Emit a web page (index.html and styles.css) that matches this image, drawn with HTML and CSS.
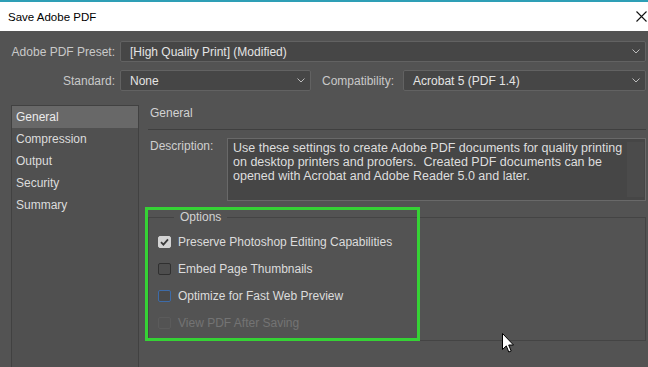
FILE: index.html
```html
<!DOCTYPE html>
<html>
<head>
<meta charset="utf-8">
<link rel="stylesheet" href="styles.css">
</head>
<body>
<div class="window">
  <div class="titlebar">
    <span class="title">Save Adobe PDF</span>
    <svg class="close" width="11" height="11" viewBox="0 0 11 11"><path d="M0.5 0.5 L10.5 10.5 M10.5 0.5 L0.5 10.5" stroke="#111" stroke-width="1.1" fill="none"/></svg>
  </div>

  <div class="top">
    <div class="row">
      <span class="lbl lbl-main">Adobe PDF Preset:</span>
      <div class="select grow">
        <span>[High Quality Print] (Modified)</span>
        <svg class="chev" width="8" height="5" viewBox="0 0 8 5"><path d="M0.5 0.5 L4 4 L7.5 0.5" stroke="#bdbdbd" fill="none"/></svg>
      </div>
    </div>
    <div class="row">
      <span class="lbl lbl-main">Standard:</span>
      <div class="select std">
        <span>None</span>
        <svg class="chev" width="8" height="5" viewBox="0 0 8 5"><path d="M0.5 0.5 L4 4 L7.5 0.5" stroke="#bdbdbd" fill="none"/></svg>
      </div>
      <span class="lbl lbl-compat">Compatibility:</span>
      <div class="select grow">
        <span>Acrobat 5 (PDF 1.4)</span>
        <svg class="chev" width="8" height="5" viewBox="0 0 8 5"><path d="M0.5 0.5 L4 4 L7.5 0.5" stroke="#bdbdbd" fill="none"/></svg>
      </div>
    </div>
  </div>

  <div class="main">
    <ul class="nav">
      <li class="active">General</li>
      <li>Compression</li>
      <li>Output</li>
      <li>Security</li>
      <li>Summary</li>
    </ul>
    <div class="content">
      <div class="header">General</div>
      <div class="desc-row">
        <span class="desc-lbl">Description:</span>
        <div class="desc-box">
          <div class="desc-text">Use these settings to create Adobe PDF documents for quality printing on desktop printers and proofers.&nbsp; Created PDF documents can be opened with Acrobat and Adobe Reader 5.0 and later.</div>
          <div class="scroll"></div>
        </div>
      </div>
      <fieldset class="options">
        <legend>Options</legend>
        <div class="opt"><span class="cb checked"><svg width="13" height="12" viewBox="0 0 13 12"><path d="M3 6.2 L5.4 8.6 L10 3.4" stroke="#3a3a3a" stroke-width="1.8" fill="none"/></svg></span><span>Preserve Photoshop Editing Capabilities</span></div>
        <div class="opt"><span class="cb"></span><span>Embed Page Thumbnails</span></div>
        <div class="opt"><span class="cb focus"></span><span>Optimize for Fast Web Preview</span></div>
        <div class="opt disabled"><span class="cb"></span><span>View PDF After Saving</span></div>
      </fieldset>
    </div>
  </div>

  <div class="highlight"></div>
  <svg class="cursor" width="13" height="21" viewBox="0 0 13 21"><path d="M0.5 0.5 L0.5 16.5 L4.3 12.9 L6.8 19 L9.2 18 L6.7 12 L11.5 12 Z" fill="#fff" stroke="#000" stroke-width="1"/></svg>
</div>
</body>
</html>
```

FILE: styles.css
```css
* { box-sizing: border-box; }
html, body { margin: 0; padding: 0; }
body {
  width: 648px;
  height: 367px;
  overflow: hidden;
  background: #535353;
  font-family: "Liberation Sans", Arial, sans-serif;
  font-size: 12px;
  color: #cfcfcf;
}
.window { position: relative; width: 648px; height: 367px; }

.titlebar {
  height: 31px;
  background: #fff;
  border-top: 2px solid #2e9fb6;
  display: flex;
  align-items: center;
  justify-content: space-between;
  padding: 0 1px 0 8px;
  color: #000;
  font-size: 11.5px;
}
.close { margin-top: -1px; }

.top { padding: 10px 2px 0 0; display: flex; flex-direction: column; gap: 8px; }
.row { display: flex; align-items: center; height: 21px; }
.lbl { color: #c9c9c9; white-space: nowrap; }
.lbl-main { width: 115px; text-align: right; margin-right: 5px; }
.lbl-compat { margin: 0 9px 0 11px; }

.select {
  height: 21px;
  background: #464646;
  border: 1px solid #626262;
  border-radius: 2px;
  display: flex;
  align-items: center;
  justify-content: space-between;
  padding: 0 5px 0 9px;
  color: #e4e4e4;
}
.select.std { width: 191px; }
.select.grow { flex: 1; }
.chev { flex: none; }

.main { display: flex; margin-top: 10px; align-items: flex-start; }
.nav {
  list-style: none;
  margin: 4px 0 0 11px;
  padding: 0;
  width: 128px;
  height: 280px;
  background: #505050;
  border: 1px solid #414141;
  border-bottom: none;
}
.nav li { height: 22px; line-height: 22px; padding-left: 4px; color: #dcdcdc; }
.nav li.active { background: #686868; color: #ececec; }

.content { flex: 1; margin-left: 9px; margin-right: 2px; }
.header {
  padding: 4px 0 8px 2px;
  line-height: 16px;
  height: 29px;
  border-bottom: 1px solid #3f3f3f;
  color: #d2d2d2;
}
.desc-row { display: flex; margin-top: 8px; }
.desc-lbl { width: 79px; padding-left: 2px; line-height: 16px; color: #cfcfcf; }
.desc-box {
  flex: 1;
  height: 63px;
  background: #464646;
  border: 1px solid #696969;
  display: flex;
  padding: 2px 1px 2px 5px;
}
.desc-text { flex: 1; font-size: 12.5px; line-height: 14px; color: #dedede; }
.scroll { width: 17px; background: #4b4b4b; margin: 1px 0; }

.options {
  margin: 8px 0 0 0;
  padding: 3px 0 4px 9px;
  border: 1px solid #444;
  min-width: 0;
}
.options legend {
  margin-left: 16px;
  padding: 0 6px;
  line-height: 16px;
  color: #d2d2d2;
}
.opt { display: flex; align-items: center; height: 27px; gap: 7px; color: #dcdcdc; }
.cb {
  width: 13px;
  height: 12px;
  border: 1px solid #303030;
  border-radius: 2px;
  background: #4e4e4e;
  display: flex;
}
.cb.checked { background: #d3d3d3; border-color: #d3d3d3; }
.cb.checked svg { margin: -1px; }
.cb.focus { border-color: #3d6ba8; background: #4a4a4a; }
.opt.disabled { color: #747474; }
.opt.disabled .cb { border-color: #5b5b5b; background: #535353; }

.highlight {
  position: absolute;
  left: 145px;
  top: 207px;
  width: 275px;
  height: 134px;
  border: 3px solid #35d235;
}
.cursor { position: absolute; left: 502px; top: 333px; }
```
